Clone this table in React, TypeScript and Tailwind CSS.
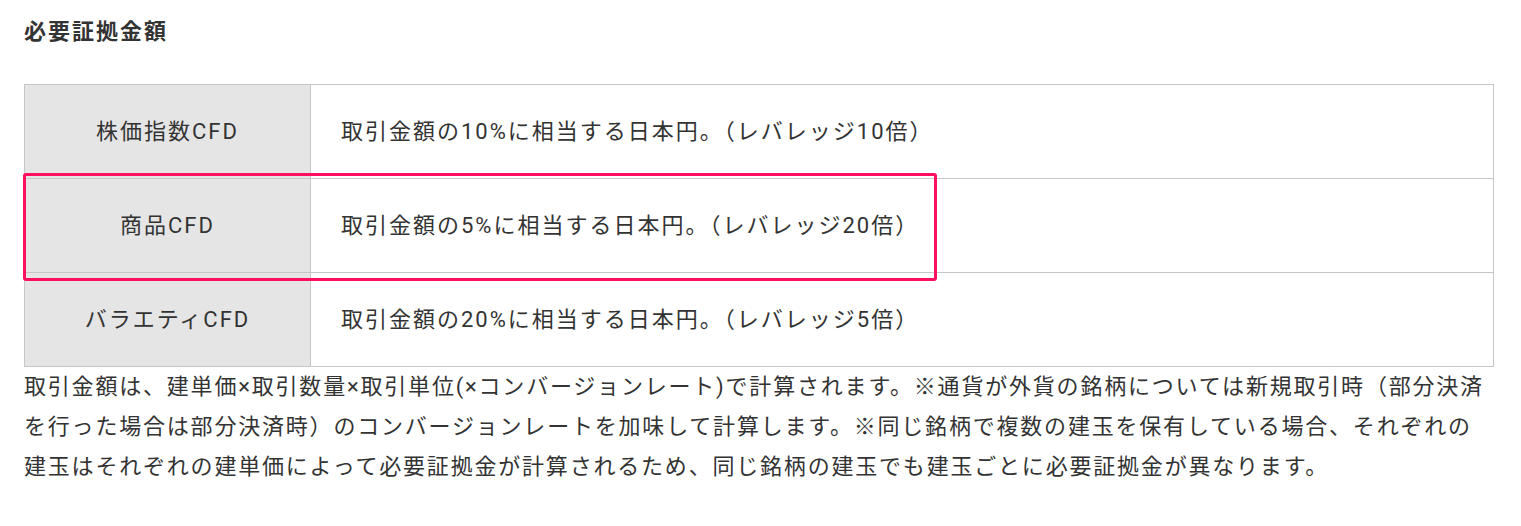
const rows = [
  { name: "株価指数CFD", desc: "取引金額の10%に相当する日本円。（レバレッジ10倍）" },
  { name: "商品CFD", desc: "取引金額の5%に相当する日本円。（レバレッジ20倍）" },
  { name: "バラエティCFD", desc: "取引金額の20%に相当する日本円。（レバレッジ5倍）" },
];

export default function App() {
  return (
    <div className="min-h-screen bg-white px-[24px] pt-[16px] pr-[27px] font-['Roboto','Noto_Sans_CJK_JP',sans-serif] text-[#333] text-[22px] tracking-[2px]">
      <h2 className="font-bold leading-[32px] mb-[36px]">必要証拠金額</h2>

      {/* table with highlight box over the 2nd row */}
      <div className="relative">
        <table className="w-full border-collapse">
          <tbody>
            {rows.map((r) => (
              <tr key={r.name} className="h-[94px]">
                <th className="w-[286px] border border-[#c6c6c6] bg-[#e5e5e5] text-center font-normal">
                  {r.name}
                </th>
                <td className="border border-[#c6c6c6] pl-[30px] text-left">{r.desc}</td>
              </tr>
            ))}
          </tbody>
        </table>
        <div className="absolute left-[-1px] top-[89px] w-[914px] h-[108px] border-[3px] border-[#ff0f5f] rounded-[3px] pointer-events-none"></div>
      </div>

      <p className="leading-[40px] tracking-[1.8px]">
        取引金額は、建単価×取引数量×取引単位(×コンバージョンレート)で計算されます。※通貨が外貨の銘柄については新規取引時（部分決済を行った場合は部分決済時）のコンバージョンレートを加味して計算します。※同じ銘柄で複数の建玉を保有している場合、それぞれの建玉はそれぞれの建単価によって必要証拠金が計算されるため、同じ銘柄の建玉でも建玉ごとに必要証拠金が異なります。
      </p>
    </div>
  );
}
